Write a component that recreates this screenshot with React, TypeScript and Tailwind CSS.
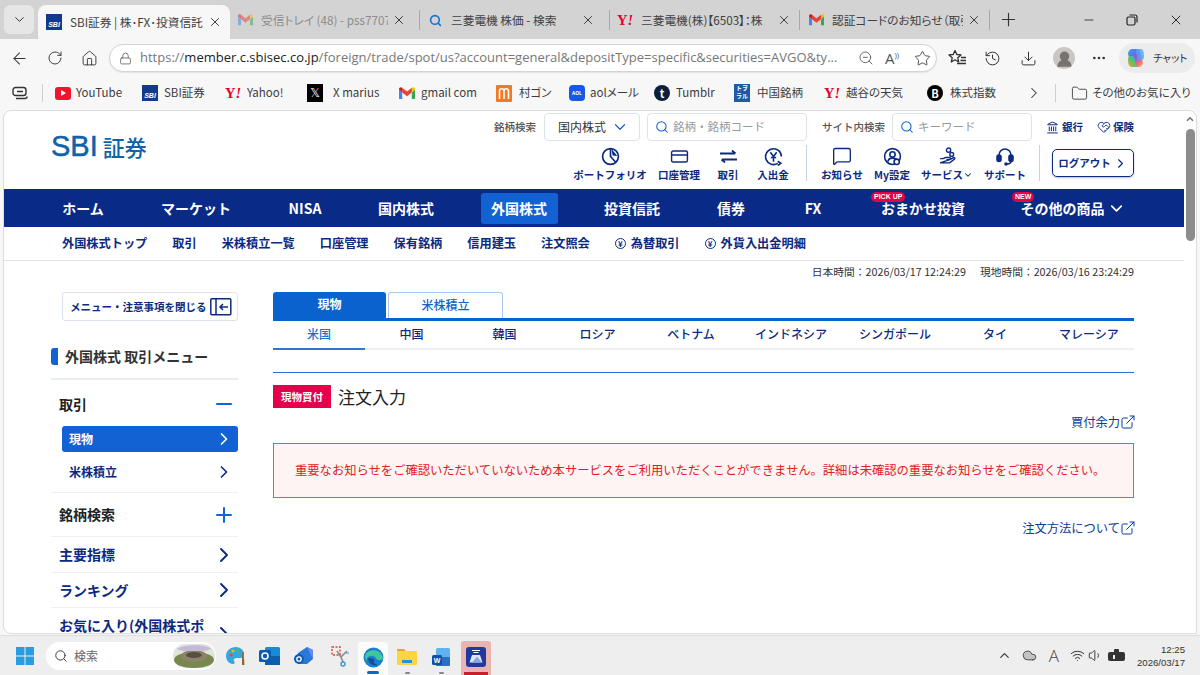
import React from "react";
import {
  ChevronDown, ChevronRight, ChevronUp, X, Plus, Minus, ArrowLeft, RotateCw, Home, Lock, ZoomOut, Star, History, Download,
  MoreHorizontal, Folder, Search, MessageSquare, ExternalLink, Landmark, Cloud, Wifi, Volume1, HeartHandshake, CreditCard, UserRound,
} from "lucide-react";

const JP = "font-['Noto_Sans_CJK_JP','Noto_Sans',sans-serif]";

function Gmail({ s = 16 }: { s?: number }) {
  return (
    <svg width={s} height={s * 0.8} viewBox="0 0 20 16" className="shrink-0">
      <path d="M0 3v12h4V7z" fill="#4285f4" />
      <path d="M16 7v8h4V3z" fill="#34a853" />
      <path d="M16 1v6l4-4V2.500C20 .5 17.500-.5 16 1z" fill="#fbbc04" />
      <path d="M4 7V1l6 4.500L16 1v6l-6 4.500z" fill="#ea4335" />
      <path d="M0 2.500V3l4 4V1C2.500-.5 0 .5 0 2.500z" fill="#c5221f" />
    </svg>
  );
}
function SbiIcon() {
  return (
    <div className="w-4 h-4 bg-[#123a8c] flex items-end justify-center shrink-0 overflow-hidden">
      <span className="text-white text-[7px] leading-[11px] font-bold italic font-['Liberation_Sans',sans-serif]">SBI</span>
    </div>
  );
}
function YIcon() {
  return <span className="w-4 text-center text-[14.500px] leading-4 font-bold shrink-0 font-['Liberation_Serif',serif] text-[#e4002b] whitespace-nowrap">Y<span className="italic">!</span></span>;
}
function Tab({ icon, label, active, faded, sep = true, pad }: { icon: React.ReactNode; label: string; active?: boolean; faded?: boolean; sep?: boolean; pad: string }) {
  return (
    <div className={`shrink-0 flex items-center ${pad} ${active ? "bg-[#f7f7f7] rounded-t-lg w-[192px] mt-[5px] h-[34px]" : `w-[190px] my-[10px] h-[20px] ${sep ? "border-r border-[#a8a8a8]" : ""}`}`}>
      <div className="w-4 flex justify-center shrink-0">{icon}</div>
      <span className={`ml-[8px] flex-1 overflow-hidden whitespace-nowrap text-[11.700px] [font-feature-settings:'palt'] ${faded ? "text-[#8d8d8d]" : "text-[#404040]"}`}>{label}</span>
      <X size={14} strokeWidth={1.6} className="ml-[4px] text-[#303030] shrink-0" />
    </div>
  );
}
function Bm({ icon, label, w, gap = "ml-[6px]" }: { icon: React.ReactNode; label: string; w: string; gap?: string }) {
  return (
    <div className={`flex items-center shrink-0 ${w}`}>
      {icon}
      <span className={`${gap} text-[11.500px] text-[#3c3c3c] whitespace-nowrap [font-feature-settings:'palt']`}>{label}</span>
    </div>
  );
}
function Circle({ c, t, size = "text-[9px]" }: { c: string; t: string; size?: string }) {
  return <div className={`w-4 h-4 rounded-full flex items-center justify-center text-white font-bold shrink-0 ${size}`} style={{ background: c }}>{t}</div>;
}
function HeadIcon({ w, icon, label, chev }: { w: string; icon: React.ReactNode; label: string; chev?: boolean }) {
  return (
    <div className={`flex flex-col items-center shrink-0 ${w}`}>
      <div className="h-[22px] flex items-center justify-center text-[#0b2a80]">{icon}</div>
      <div className="text-[10.500px] leading-[16px] font-bold text-[#0b2a80] whitespace-nowrap flex items-center">{label}{chev && <ChevronDown size={10} strokeWidth={2.5} />}</div>
    </div>
  );
}
const NAV: [string, string][] = [["ホーム", "w-[80px]"], ["マーケット", "w-[146px]"], ["NISA", "w-[72px]"], ["国内株式", "w-[130px]"], ["外国株式", "w-[96px]"], ["投資信託", "w-[130px]"], ["債券", "w-[68px]"], ["FX", "w-[96px]"]];
const COUNTRY: [string, string][] = [["中国", "w-[93px]"], ["韓国", "w-[93px]"], ["ロシア", "w-[93px]"], ["ベトナム", "w-[94px]"], ["インドネシア", "w-[106px]"], ["シンガポール", "w-[102px]"], ["タイ", "w-[98px]"], ["マレーシア", "w-[90px]"]];

function Row({ label, cls, icon, h = "h-[36px]" }: { label: string; cls: string; icon: React.ReactNode; h?: string }) {
  return (
    <div className={`${h} border-b border-[#edf1f6] flex items-center justify-between pl-[8px] pr-[2px] shrink-0`}>
      <span className={`text-[14px] font-bold whitespace-nowrap ${cls}`}>{label}</span>
      {icon}
    </div>
  );
}

export default function App() {
  return (
    <div className={`w-[1200px] h-[675px] overflow-hidden flex flex-col bg-[#f7f7f7] ${JP}`}>
      {/* tab strip */}
      <div className="h-[39px] bg-[#d3d3d3] flex shrink-0 pl-[4px]">
        <div className="w-[30px] h-[29px] mt-[5px] rounded-md bg-[#e6e6e6] flex items-center justify-center mr-[4px] shrink-0">
          <ChevronDown size={15} strokeWidth={1.6} className="text-[#333]" />
        </div>
        <Tab active pad="pl-[8px] pr-[8px]" icon={<SbiIcon />} label="SBI証券 | 株･FX･投資信託" />
        <Tab faded pad="pl-[7px] pr-[13px]" icon={<span className="opacity-50"><Gmail s={15} /></span>} label="受信トレイ (48) - pss7707@" />
        <Tab pad="pl-[7px] pr-[14px]" icon={<Search size={13} strokeWidth={3} className="text-[#1a73c8]" />} label="三菱電機 株価 - 検索" />
        <Tab pad="pl-[7px] pr-[8px]" icon={<YIcon />} label="三菱電機(株)【6503】：株" />
        <Tab pad="pl-[8px] pr-[8px]" icon={<Gmail s={15} />} label="認証コードのお知らせ（取引" />
        <Plus size={21} strokeWidth={1.3} className="text-[#333] ml-[8px] mt-[9px] shrink-0" />
        <div className="flex-1 flex justify-end items-center pr-[16px] gap-[30px] text-[#222]">
          <Minus size={14} strokeWidth={1.4} />
          <svg width="12" height="12" viewBox="0 0 12 12" fill="none" stroke="#222" strokeWidth="1.200"><rect x="1" y="3" width="8" height="8" rx="1.500" /><path d="M3.500 1h5.500a2 2 0 0 1 2 2v5.500" /></svg>
          <X size={16} strokeWidth={1.4} />
        </div>
      </div>
      {/* address bar */}
      <div className="h-[38px] flex items-center shrink-0 text-[#333]">
        <ArrowLeft size={19} strokeWidth={1.3} className="ml-[10px] shrink-0" />
        <RotateCw size={16} strokeWidth={1.4} className="ml-[18px] shrink-0" />
        <Home size={17} strokeWidth={1.3} className="ml-[18px] shrink-0" />
        <div className="ml-[11px] w-[828px] h-[28px] rounded-full border border-[#d4d4d4] bg-white flex items-center pl-[8px] pr-[5px] shadow-[0_1px_1px_rgba(0,0,0,0.08)] shrink-0">
          <Lock size={13} strokeWidth={1.4} className="text-[#555] ml-[1px] shrink-0" />
          <div className="ml-[8px] flex-1 whitespace-nowrap overflow-hidden text-[13px] font-['Open_Sans',sans-serif] text-[#777]">
            https://<span className="text-[#222]">member.c.sbisec.co.jp</span>/foreign/trade/spot/us?account=general&amp;depositType=specific&amp;securities=AVGO&amp;ty...
          </div>
          <ZoomOut size={16} strokeWidth={1.3} className="text-[#555] shrink-0" />
          <span className="ml-[11px] w-[18px] text-[15px] text-[#555] font-['Open_Sans',sans-serif] shrink-0">A<span className="text-[8px] align-super">))</span></span>
          <Star size={17} strokeWidth={1.3} className="ml-[11px] text-[#444] shrink-0" />
        </div>
        <svg width="19" height="18" viewBox="0 0 19 18" fill="none" stroke="#333" strokeWidth="1.300" className="ml-[11px] shrink-0"><path d="M7 1.500l1.800 4 4.200.4-3.200 2.900.9 4.200L7 10.800l-3.700 2.200.9-4.200L1 5.900l4.200-.4z" strokeLinejoin="round" /><path d="M13 8.500h5M12.500 11.500h5.500M9 14.500h9" /></svg>
        <History size={17} strokeWidth={1.4} className="ml-[17px] shrink-0" />
        <Download size={17} strokeWidth={1.4} className="ml-[19px] shrink-0" />
        <div className="ml-[16px] w-[22px] h-[22px] rounded-full bg-[#c9c7c3] flex items-center justify-center overflow-hidden shrink-0">
          <UserRound size={19} fill="#77736e" stroke="#77736e" className="mt-[2px]" />
        </div>
        <MoreHorizontal size={16} strokeWidth={2} className="ml-[16px] shrink-0" />
        <div className="ml-[12px] w-[76px] h-[30px] rounded-full bg-[#ececec] flex items-center pl-[6px] shrink-0">
          <svg width="22" height="22" viewBox="0 0 22 22" className="shrink-0"><defs><linearGradient id="cp" x1="0" y1="0" x2="1" y2="1"><stop offset="0" stopColor="#2aa7ea" /><stop offset=".45" stopColor="#7d5cf0" /><stop offset=".75" stopColor="#ef6a8a" /><stop offset="1" stopColor="#f6b73c" /></linearGradient><linearGradient id="cq" x1="0" y1="1" x2="1" y2="0"><stop offset="0" stopColor="#f0a030" /><stop offset=".5" stopColor="#55c56d" /><stop offset="1" stopColor="#2a9ff0" /></linearGradient></defs><path d="M7 2h5c2 0 2.500 1 3 3l3 11c-1 3-3 4-5 4H9c-2 0-2.600-1-3-3L3 7c0-3 2-5 4-5z" fill="url(#cp)" /><path d="M3 12c0-2 1-3 3-3h3l2 8c.5 2 1 3 2 3H7c-3 0-4-3-4-8z" fill="url(#cq)" /><path d="M12 2h4c2 0 3 3 3 8 0 2-1 3-3 3h-3L11 5c-.3-1.500 0-3 1-3z" fill="#4fa6f5" opacity=".8" /></svg>
          <span className="ml-[6px] text-[10.500px] text-[#333] whitespace-nowrap [font-feature-settings:'palt']">チャット</span>
        </div>
      </div>
      {/* bookmarks */}
      <div className="h-[33px] flex items-center shrink-0 pb-[1px]">
        <svg width="16" height="14" viewBox="0 0 16 14" fill="none" stroke="#333" strokeWidth="1.400" className="ml-[12px] shrink-0"><rect x="1" y="1.500" width="13" height="8" rx="2.500" /><path d="M4 12.500h9a2 2 0 0 0 2-2M5 5.500h6" /></svg>
        <div className="ml-[14px] w-px h-[18px] bg-[#cfcfcf] shrink-0" />
        <div className="w-[12px] shrink-0" />
        <Bm w="w-[87px]" gap="ml-[5px]" icon={<div className="w-4 h-[13px] rounded-[3px] bg-[#f0142f] flex items-center justify-center shrink-0"><div className="w-0 h-0 border-y-[3px] border-y-transparent border-l-[5px] border-l-white" /></div>} label="YouTube" />
        <Bm w="w-[83px]" icon={<SbiIcon />} label="SBI証券" />
        <Bm w="w-[82px]" icon={<YIcon />} label="Yahoo!" />
        <Bm w="w-[92px]" gap="ml-[10px]" icon={<div className="w-4 h-[18px] bg-black text-white text-[12px] leading-[18px] text-center font-['DejaVu_Sans',sans-serif] shrink-0">𝕏</div>} label="X marius" />
        <Bm w="w-[97px]" icon={<Gmail />} label="gmail com" />
        <Bm w="w-[73px]" gap="ml-[7px]" icon={<svg width="16" height="17" viewBox="0 0 16 17" className="shrink-0"><rect width="16" height="17" rx="1" fill="#f47a20" /><path d="M3.500 14V6a2.200 2.200 0 0 1 4.500 0v8M8 6a2.200 2.200 0 0 1 4.500 0v8" fill="none" stroke="#fff" strokeWidth="1.600" /></svg>} label="村ゴン" />
        <Bm w="w-[85px]" gap="ml-[5px]" icon={<div className="w-4 h-4 rounded-[4px] bg-[#1659e6] text-white text-[5px] leading-4 font-bold text-center shrink-0">AOL</div>} label="aolメール" />
        <Bm w="w-[80px]" icon={<Circle c="#0c1f3a" t="t" size="text-[11px]" />} label="Tumblr" />
        <Bm w="w-[90px]" gap="ml-[7px]" icon={<div className="w-4 h-[18px] bg-[#1f5aa8] text-white text-[6px] leading-[8px] text-center font-bold shrink-0">トヲ<br />ラル</div>} label="中国銘柄" />
        <Bm w="w-[103px]" icon={<YIcon />} label="越谷の天気" />
        <Bm w="w-[98px]" gap="ml-[7px]" icon={<Circle c="#000" t="B" size="text-[11px]" />} label="株式指数" />
        <ChevronRight size={18} strokeWidth={1.4} className="text-[#333] shrink-0" />
        <div className="ml-[12px] w-px h-[18px] bg-[#cfcfcf] shrink-0" />
        <Folder size={17} strokeWidth={1.2} className="ml-[15px] text-[#333] shrink-0" />
        <span className="ml-[4px] text-[11.500px] text-[#3c3c3c] whitespace-nowrap [font-feature-settings:'palt']">その他のお気に入り</span>
      </div>
      {/* page */}
      <div className="h-[524px] shrink-0 ml-[3px] mr-[3px] bg-white border border-[#dcdcdc] rounded-t-lg rounded-bl-lg overflow-hidden flex">
        <div className="w-[1180px] shrink-0 overflow-hidden flex flex-col">
          {/* header */}
          <div className="h-[78px] shrink-0 flex pl-[47px] pr-[50px]">
            <div className="pt-[16px] shrink-0 flex items-start">
              <span className="text-[22px] leading-[38px] text-[#0f63a8] font-medium whitespace-nowrap"><span className="text-[29px] font-['Liberation_Sans',sans-serif] font-normal mr-[5px] [-webkit-text-stroke:0.5px_#0f63a8]">SBI</span>証券</span>
            </div>
            <div className="flex-1 flex flex-col items-end">
              <div className="flex items-center h-[28px] mt-[2px]">
                <span className="text-[10.500px] font-medium text-[#555]">銘柄検索</span>
                <div className="ml-[8px] w-[96px] h-[28px] border border-[#dde3ea] rounded-[4px] flex items-center pl-[13px]">
                  <span className="text-[12px] text-[#333]">国内株式</span>
                  <ChevronDown size={18} strokeWidth={1.6} className="ml-[5px] text-[#1262cc]" />
                </div>
                <div className="ml-[7px] w-[160px] h-[28px] border border-[#dde3ea] rounded-[4px] flex items-center pl-[7px]">
                  <Search size={14} strokeWidth={1.8} className="text-[#1262cc]" />
                  <span className="ml-[4px] text-[11.500px] text-[#9a9a9a]">銘柄・銘柄コード</span>
                </div>
                <span className="ml-[15px] text-[10.500px] font-medium text-[#555]">サイト内検索</span>
                <div className="ml-[7px] w-[140px] h-[28px] border border-[#dde3ea] rounded-[4px] flex items-center pl-[7px]">
                  <Search size={14} strokeWidth={1.8} className="text-[#1262cc]" />
                  <span className="ml-[4px] text-[11.500px] text-[#9a9a9a]">キーワード</span>
                </div>
                <div className="ml-[14px] flex items-center text-[#0b2a80]"><Landmark size={13} strokeWidth={1.8} /><span className="ml-[3px] text-[10.500px] font-bold">銀行</span></div>
                <div className="ml-[14px] flex items-center text-[#0b2a80]"><HeartHandshake size={14} strokeWidth={1.5} /><span className="ml-[2px] text-[10.500px] font-bold">保険</span></div>
              </div>
              <div className="flex items-start mt-[4px]">
                <HeadIcon w="w-[74px]" label="ポートフォリオ" icon={<svg width="19" height="19" viewBox="0 0 18 18" fill="none" stroke="#0b2a80" strokeWidth="1.600"><circle cx="9" cy="9" r="7.500" /><path d="M9 1.500v7.500l5 5.500" /><path d="M10 2l5.500 6.500L11 8z" fill="#0b2a80" stroke="none" /></svg>} />
                <HeadIcon w="w-[64px]" label="口座管理" icon={<CreditCard size={19} strokeWidth={1.8} />} />
                <HeadIcon w="w-[34px]" label="取引" icon={<svg width="17" height="13" viewBox="0 0 17 13" fill="none" stroke="#0b2a80" strokeWidth="1.800"><path d="M0 3.500h15M12 .5l3.500 3M17 9.500H2M5 12.500l-3.500-3" /></svg>} />
                <HeadIcon w="w-[56px]" label="入出金" icon={<svg width="19" height="19" viewBox="0 0 18 18" fill="none" stroke="#0b2a80" strokeWidth="1.500"><path d="M13 15.500A7.500 7.500 0 1 1 16.500 9" /><path d="M6 5l3 4 3-4M9 9v5M6.500 10h5" /><path d="M13 13.500l3 2-3 2" /></svg>} />
                <div className="w-px h-[36px] bg-[#c9d3e0] ml-[5px] mr-[4px]" />
                <HeadIcon w="w-[62px]" label="お知らせ" icon={<MessageSquare size={20} strokeWidth={1.6} />} />
                <HeadIcon w="w-[38px]" label="My設定" icon={<svg width="19" height="19" viewBox="0 0 18 18" fill="none" stroke="#0b2a80" strokeWidth="1.500"><circle cx="9" cy="9" r="7.500" /><circle cx="9" cy="7" r="2.500" /><path d="M4.500 14c.5-2.500 2.500-3.500 4.500-3.500s4 1 4.500 3.500" /><circle cx="13" cy="14" r="2.500" fill="#fff" /></svg>} />
                <HeadIcon w="w-[72px]" chev label="サービス" icon={<svg width="19" height="19" viewBox="0 0 18 18" fill="none" stroke="#0b2a80" strokeWidth="1.300"><circle cx="10" cy="3" r="2" /><circle cx="13" cy="7" r="1.800" /><path d="M2 11h3l2-1h4c1 0 1 2 0 2H8m3 0 4-2c1.500 0 1 1.500 0 2l-4 3H2z" /></svg>} />
                <HeadIcon w="w-[44px]" label="サポート" icon={<svg width="18" height="19" viewBox="0 0 18 19" fill="none" stroke="#0b2a80" strokeWidth="1.600"><path d="M3 10V8a6 6 0 0 1 12 0v2" /><rect x="1" y="8" width="4" height="6.500" rx="2" fill="#0b2a80" /><rect x="13" y="8" width="4" height="6.500" rx="2" fill="#0b2a80" /><path d="M15 14c0 2-1.500 3-4 3" /><circle cx="10" cy="17" r="1" fill="#0b2a80" /></svg>} />
                <div className="w-px h-[36px] bg-[#c9d3e0] ml-[12px] mr-[12px]" />
                <div className="w-[82px] h-[28px] mt-[4px] border border-[#0b2a80] rounded-[5px] shadow-[0_1px_2px_rgba(11,42,128,0.3)] flex items-center justify-center text-[#0b2a80]">
                  <span className="text-[10.500px] font-bold">ログアウト</span>
                  <ChevronRight size={15} strokeWidth={1.8} className="ml-[2px]" />
                </div>
              </div>
            </div>
          </div>
          {/* nav */}
          <div className="h-[38px] shrink-0 bg-[#0a2a88] flex items-center pl-[39px] text-white">
            {NAV.map(([t, w]) => (
              <div key={t} className={`${w} flex justify-center`}>
                <span className={`text-[14px] font-bold h-[31px] leading-[31px] rounded-[3px] whitespace-nowrap ${t === "外国株式" ? "bg-[#1262d4] w-[77px] text-center" : ""}`}>{t}</span>
              </div>
            ))}
            <div className="w-[124px] flex justify-center relative">
              <span className="absolute -top-[6px] left-[10px] h-[10px] leading-[10px] px-[3px] rounded-full bg-[#e60045] text-[7px] font-bold font-['Liberation_Sans',sans-serif]">PICK UP</span>
              <span className="text-[14px] font-bold">おまかせ投資</span>
            </div>
            <div className="w-[176px] flex justify-center items-center relative">
              <span className="absolute -top-[6px] left-[27px] h-[10px] leading-[10px] px-[3px] rounded-full bg-[#e60045] text-[7px] font-bold font-['Liberation_Sans',sans-serif]">NEW</span>
              <span className="text-[14px] font-bold">その他の商品</span>
              <ChevronDown size={19} strokeWidth={2.2} className="ml-[2px]" />
            </div>
          </div>
          {/* subnav */}
          <div className="h-[34px] shrink-0 border-b border-[#e0e5ec] flex items-center pl-[58px] text-[12.200px] font-bold text-[#0b2a80] whitespace-nowrap">
            <span>外国株式トップ</span>
            <span className="ml-[25px]">取引</span>
            <span className="ml-[25px]">米株積立一覧</span>
            <span className="ml-[25px]">口座管理</span>
            <span className="ml-[25px]">保有銘柄</span>
            <span className="ml-[25px]">信用建玉</span>
            <span className="ml-[25px]">注文照会</span>
            <span className="ml-[25px] flex items-center"><span className="w-[11px] h-[11px] rounded-full border border-[#0b2a80] text-[8px] leading-[9px] text-center mr-[5px]">¥</span>為替取引</span>
            <span className="ml-[25px] flex items-center"><span className="w-[11px] h-[11px] rounded-full border border-[#0b2a80] text-[8px] leading-[9px] text-center mr-[5px]">¥</span>外貨入出金明細</span>
          </div>
          {/* date */}
          <div className="h-[23px] shrink-0 flex items-center justify-end pr-[50px] text-[10.750px] text-[#333] whitespace-nowrap">
            <span>日本時間：2026/03/17 12:24:29</span>
            <span className="ml-[14px]">現地時間：2026/03/16 23:24:29</span>
          </div>
          <div className="flex pl-[47px] pr-[50px] flex-1 min-h-0">
            {/* sidebar */}
            <div className="w-[187px] shrink-0 flex flex-col pt-[8px]">
              <div className="ml-[11px] w-[176px] h-[29px] shrink-0 border border-[#dde3ea] rounded-[3px] flex items-center pl-[7px]">
                <span className="text-[10.500px] font-bold text-[#0b2a80] whitespace-nowrap">メニュー・注意事項を閉じる</span>
                <svg width="22" height="18" viewBox="0 0 22 18" fill="none" stroke="#0b2a80" strokeWidth="1.500" className="ml-[3px] shrink-0"><rect x=".8" y=".8" width="20" height="16" rx="1" /><path d="M6 .8v16M18 9h-8M13 6l-3 3 3 3" /></svg>
              </div>
              <div className="h-[59px] shrink-0 border-b-2 border-[#e8edf3] flex items-center pt-[14px]">
                <div className="w-[7px] h-[17px] bg-[#1262d4] rounded-l-[3px]" />
                <span className="ml-[7px] text-[14px] font-bold text-[#333] whitespace-nowrap">外国株式 取引メニュー</span>
              </div>
              <div className="h-[46px] shrink-0 flex items-center justify-between pl-[8px] pr-[2px] pt-[2px]">
                <span className="text-[14px] font-bold text-[#222]">取引</span>
                <Minus size={24} strokeWidth={2} className="text-[#1262d4]" />
              </div>
              <div className="ml-[11px] h-[26px] shrink-0 bg-[#1262d4] rounded-[3px] flex items-center justify-between pl-[7px] pr-[4px] text-white">
                <span className="text-[12px] font-bold">現物</span>
                <ChevronRight size={20} strokeWidth={2} />
              </div>
              <div className="h-[41px] shrink-0 border-b border-[#edf1f6] flex items-center justify-between pl-[18px] pr-[4px] text-[#0b2a80]">
                <span className="text-[12px] font-bold">米株積立</span>
                <ChevronRight size={20} strokeWidth={2} />
              </div>
              <Row h="h-[44px]" label="銘柄検索" cls="text-[#222]" icon={<Plus size={24} strokeWidth={2} className="text-[#1262d4]" />} />
              <Row label="主要指標" cls="text-[#0b2a80]" icon={<ChevronRight size={24} strokeWidth={1.9} className="text-[#0b2a80]" />} />
              <Row h="h-[35px]" label="ランキング" cls="text-[#0b2a80]" icon={<ChevronRight size={24} strokeWidth={1.9} className="text-[#0b2a80]" />} />
              <Row label="お気に入り(外国株式ポ" cls="text-[#0b2a80]" icon={<ChevronRight size={24} strokeWidth={1.9} className="text-[#0b2a80] mt-[16px]" />} />
            </div>
            {/* main */}
            <div className="flex-1 ml-[35px] pt-[8px] flex flex-col min-w-0">
              <div className="flex h-[26px] shrink-0">
                <div className="w-[113px] bg-[#0a62cf] rounded-t-[3px] text-white text-[12px] font-bold flex items-center justify-center pb-[2px]">現物</div>
                <div className="ml-[2px] w-[115px] border border-[#a9c8ef] border-b-0 rounded-t-[3px] text-[#1262c8] text-[12px] font-medium flex items-center justify-center pb-[2px]">米株積立</div>
              </div>
              <div className="h-[3px] bg-[#0a62cf] shrink-0" />
              <div className="flex h-[29px] shrink-0 border-b-2 border-[#eeeef3]">
                <div className="w-[92px] h-[29px] border-b-2 border-[#2a78d8] text-center text-[12px] leading-[26px] font-medium text-[#1f6fd0]">米国</div>
                {COUNTRY.map(([t, w]) => (
                  <div key={t} className={`${w} text-center text-[12px] leading-[26px] font-medium text-[#0b2a80] whitespace-nowrap`}>{t}</div>
                ))}
              </div>
              <div className="h-[23px] border-b border-[#2070d8] shrink-0" />
              <div className="flex items-center h-[23px] shrink-0 mt-[12px]">
                <span className="w-[58px] h-[23px] bg-[#e6004c] text-white text-[10.500px] leading-[23px] font-bold text-center">現物買付</span>
                <span className="ml-[7px] text-[17px] text-[#222]">注文入力</span>
              </div>
              <div className="flex justify-end items-center h-[16px] mt-[6px] shrink-0 text-[#0b3a9a] text-[12.250px]">
                買付余力<ExternalLink size={16} strokeWidth={1.5} className="-mr-[2px]" />
              </div>
              <div className="mt-[13px] h-[55px] shrink-0 border border-[#dd5a55] bg-[#fff4f4] flex items-center pl-[21px] text-[12.300px] text-[#e0201c] whitespace-nowrap">
                重要なお知らせをご確認いただいていないため本サービスをご利用いただくことができません。詳細は未確認の重要なお知らせをご確認ください。
              </div>
              <div className="flex justify-end items-center h-[16px] mt-[22px] shrink-0 text-[#0b3a9a] text-[12.250px]">
                注文方法について<ExternalLink size={16} strokeWidth={1.5} className="-mr-[2px]" />
              </div>
            </div>
          </div>
        </div>
        {/* scrollbar */}
        <div className="flex-1 flex flex-col items-center pt-[3px]">
          <ChevronUp size={10} strokeWidth={4} className="text-[#777]" />
          <div className="mt-[5px] w-[9px] h-[112px] rounded-full bg-[#8c8c8c]" />
        </div>
      </div>
      {/* taskbar */}
      <div className="flex-1 bg-[#eeeeee] border-t border-[#dedede] flex items-center relative mt-[1px]">
        <svg width="18" height="18" viewBox="0 0 18 18" className="ml-[16px] shrink-0"><path d="M0 0h8.500v8.500H0zM9.500 0H18v8.500H9.500zM0 9.500h8.500V18H0zM9.500 9.500H18V18H9.500z" fill="#2a9de0" /></svg>
        <div className="ml-[12px] w-[170px] h-[28px] rounded-full bg-white flex items-center pl-[8px] overflow-hidden shrink-0">
          <Search size={14} strokeWidth={1.6} className="text-[#333]" />
          <span className="ml-[6px] text-[12px] text-[#666]">検索</span>
          <svg width="42" height="24" viewBox="0 0 42 24" className="ml-auto mr-[1px]"><rect width="42" height="24" rx="12" fill="#dfe5da" /><ellipse cx="21" cy="16" rx="20" ry="8" fill="#76884f" /><ellipse cx="21" cy="12" rx="13" ry="6" fill="#8d8468" /><ellipse cx="21" cy="11" rx="8" ry="3" fill="#55503f" /><path d="M4 5c6-5 30-5 34 0l-6 2H10z" fill="#c8b8d8" /></svg>
        </div>
        <div className="ml-[9px] w-[22px] flex justify-center shrink-0"><svg width="20" height="20" viewBox="0 0 20 20"><path d="M10 1C4 1 0 5 0 10c0 5 4 8 7 8 2 0 2-2 1-3-1-2 1-3 3-3h3c3 0 4-2 4-4 0-4-4-7-8-7z" fill="#35a7dc" /><circle cx="5" cy="9" r="1.500" fill="#e9473f" /><circle cx="7" cy="5" r="1.500" fill="#f4b400" /><circle cx="12" cy="4" r="1.500" fill="#57b947" /><path d="M16 6l1.500 0 1 13-2.500 0z" fill="#8a6a3a" /></svg></div>
        <div className="ml-[11px] w-[22px] flex justify-center shrink-0"><svg width="21" height="20" viewBox="0 0 21 20"><rect x="6" y="1" width="15" height="18" rx="1.500" fill="#1a8ad4" /><rect x="6" y="10" width="15" height="9" fill="#0f5fa8" /><rect x="0" y="4" width="12" height="12" rx="1.500" fill="#0a5cb0" /><circle cx="6" cy="10" r="3" fill="none" stroke="#fff" strokeWidth="1.500" /></svg></div>
        <div className="ml-[13px] w-[22px] flex justify-center shrink-0"><svg width="20" height="20" viewBox="0 0 20 20"><path d="M4 7l9-6 6 3v9l-6 5H4z" fill="#2a78d8" /><path d="M13 1l6 3v9z" fill="#6a8cf0" /><circle cx="5" cy="13" r="5" fill="#0d5cb8" /><circle cx="5" cy="13" r="2.200" fill="none" stroke="#fff" strokeWidth="1.300" /></svg></div>
        <div className="ml-[14px] w-[22px] flex justify-center shrink-0"><svg width="18" height="22" viewBox="0 0 18 22" fill="none"><path d="M1 2h8v8H1z" stroke="#d8442f" strokeDasharray="2 1.500" strokeWidth="1.400" /><path d="M6 6l4 6 2 5M16 6l-6 6" stroke="#8a8a8a" strokeWidth="1.600" /><circle cx="12" cy="19" r="2" stroke="#3a94d6" strokeWidth="1.400" /><path d="M15 8h3" stroke="#3a94d6" /></svg></div>
        <div className="ml-[7px] w-[30px] h-[33px] self-end bg-[#fbfbfb] rounded-t-[3px] flex items-center justify-center relative shrink-0 pb-[3px]">
          <svg width="21" height="21" viewBox="0 0 20 20"><circle cx="10" cy="10" r="9.500" fill="#1b7fc9" /><path d="M2 8c2-6 14-8 17 2 .5 3-5 3-6 1.500C12 8 4 6 3 14 2 11 2 10 2 8z" fill="#3fc7a0" /><path d="M5 11c0 5 5 8 10 6-5 .5-5-4-4-5-2-1-5-2-6-1z" fill="#0d4f9e" /></svg>
          <div className="absolute bottom-[1px] w-[12px] h-[3px] rounded-full bg-[#0a6cc0]" />
        </div>
        <div className="ml-[4px] w-[30px] h-[33px] self-end flex items-center justify-center relative shrink-0 pb-[3px]">
          <svg width="20" height="18" viewBox="0 0 20 18"><path d="M0 2a1 1 0 0 1 1-1h6l2 2h-9z" fill="#e0a91e" /><rect y="3" width="20" height="14" rx="1" fill="#fcd53f" /><rect x="5" y="12" width="10" height="3" fill="#2a8fd8" /></svg>
          <div className="absolute bottom-[1px] w-[5px] h-[2px] rounded-full bg-[#888]" />
        </div>
        <div className="ml-[4px] w-[30px] h-[33px] self-end flex items-center justify-center relative shrink-0 pb-[3px]">
          <svg width="18" height="18" viewBox="0 0 18 18"><rect x="4" y="0" width="14" height="18" rx="1.500" fill="#5fb3f0" /><rect x="4" y="9" width="14" height="9" rx="1" fill="#2a6fc8" /><rect x="0" y="7" width="10" height="10" rx="1.500" fill="#124fa8" /><text x="5" y="15" textAnchor="middle" fontSize="7" fontWeight="700" fill="#fff" fontFamily="Liberation Sans">W</text></svg>
          <div className="absolute bottom-[1px] w-[5px] h-[2px] rounded-full bg-[#888]" />
        </div>
        <div className="ml-[5px] w-[30px] h-[34px] self-end bg-[#eab5b0] rounded-t-[3px] flex items-center justify-center relative shrink-0 pb-[3px]">
          <svg width="20" height="20" viewBox="0 0 20 20"><rect width="20" height="20" rx="3" fill="#1e3a9e" /><path d="M6 3.500h8M7.500 5.500h5" stroke="#fff" strokeWidth="1.200" /><path d="M6 8h8l2.500 7.500h-13z" fill="#dfe7f5" /><path d="M6 15.500l5-6 5 6z" fill="#8aa7e0" /></svg>
          <div className="absolute bottom-0 w-[24px] h-[3px] bg-[#c8202a]" />
        </div>
        <div className="ml-auto flex items-center text-[#333] shrink-0">
          <ChevronUp size={15} strokeWidth={1.8} />
          <Cloud size={15} strokeWidth={1.3} fill="#c4c4c4" className="ml-[10px]" />
          <span className="ml-[12px] text-[17px] leading-[20px] font-light font-['Open_Sans',sans-serif] text-[#444]">A</span>
          <Wifi size={15} strokeWidth={1.6} className="ml-[11px]" />
          <Volume1 size={15} strokeWidth={1.5} className="ml-[3px]" />
          <svg width="17" height="13" viewBox="0 0 17 13" className="ml-[5px]"><rect y="3" width="17" height="9" rx="2" fill="#333" /><rect x="6" y="0" width="5" height="5" rx="1" fill="#333" /><rect x="5" y="6" width="2" height="4" fill="#eee" /></svg>
          <div className="ml-[12px] mr-[15px] pt-[1px] text-right text-[9.600px] leading-[13px] text-[#333] font-['Liberation_Sans',sans-serif]">
            <div>12:25</div><div>2026/03/17</div>
          </div>
        </div>
      </div>
    </div>
  );
}
